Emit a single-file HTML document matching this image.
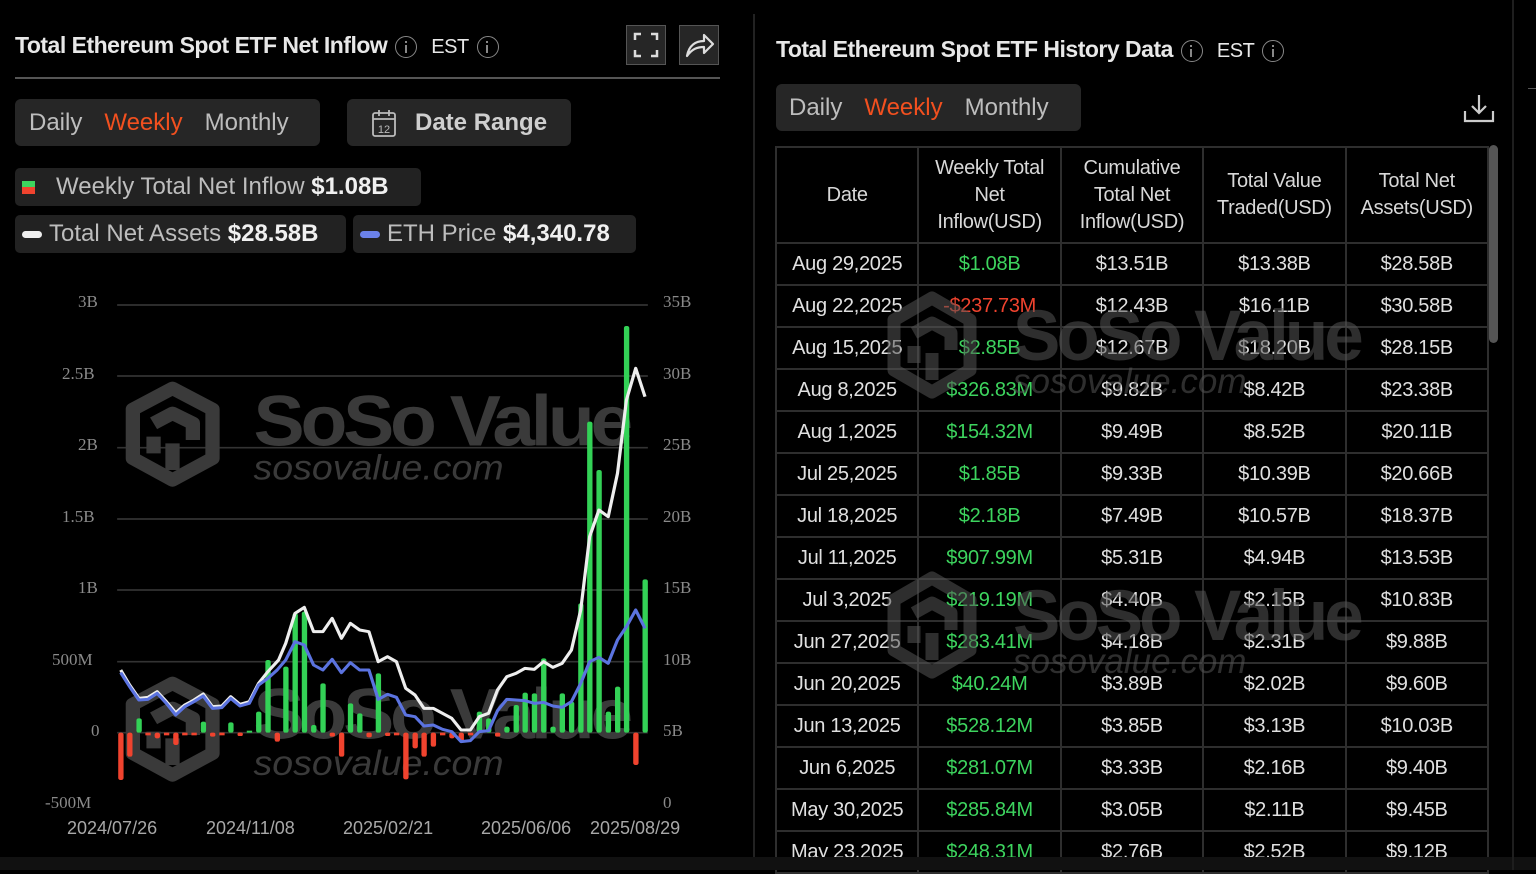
<!DOCTYPE html>
<html><head><meta charset="utf-8"><style>
*{margin:0;padding:0;box-sizing:border-box}
body{width:1536px;height:870px;background:#000;color:#e6e6e6;font-family:"Liberation Sans",sans-serif;position:relative;overflow:hidden}
.abs{position:absolute}
.title{font-size:23px;font-weight:bold;color:#e8e8e8;white-space:nowrap;letter-spacing:-0.5px}
.info{display:inline-block;width:22px;height:22px;border:1.5px solid #888;border-radius:50%;vertical-align:middle;position:relative;margin-left:8px}
.info:after{content:"";position:absolute;left:8.5px;top:8px;width:2px;height:8px;background:#888}
.info:before{content:"";position:absolute;left:8.5px;top:4px;width:2px;height:2px;background:#888}
.seg{background:#262626;border-radius:6px;font-size:24px;color:#bdbdbd;white-space:nowrap}
.orange{color:#f2501f}
.pill{background:#222;border-radius:5px;font-size:24px;color:#bdbdbd;white-space:nowrap;height:38px;line-height:38px}
.pill b{color:#f0f0f0}
.ax{font-family:"Liberation Serif",serif;font-size:17px;color:#8a8a8a}
.dt{font-size:18px;color:#a8a8a8}
table{border-collapse:collapse;position:absolute;left:775px;top:146px;width:714px;table-layout:fixed}
td{border:2px solid #2e2e2e;text-align:center;font-size:20px;color:#e0e0e0;height:42px;white-space:nowrap;letter-spacing:-0.3px}
th{border:2px solid #2e2e2e;font-weight:normal;font-size:20px;color:#d8d8d8;height:96px;line-height:27px;letter-spacing:-0.3px}
.g{color:#3dd45e}.r{color:#f0432e}
</style></head><body>

<div class="abs title" style="left:15px;top:32px">Total Ethereum Spot ETF Net Inflow<span class="info"></span><span style="font-weight:normal;margin-left:14px;font-size:20px">EST</span><span class="info"></span></div>
<div class="abs" style="left:626px;top:25px;width:40px;height:40px;background:#262626;border:1px solid #555"></div>
<svg class="abs" style="left:626px;top:25px" width="40" height="40"><path d="M9 15V9h6M25 9h6v6M31 25v6h-6M15 31H9v-6" stroke="#ddd" stroke-width="2.5" fill="none"/></svg>
<div class="abs" style="left:679px;top:25px;width:40px;height:40px;background:#262626;border:1px solid #555"></div>
<svg class="abs" style="left:679px;top:25px" width="40" height="40"><path d="M8 31C10 20 17 16 25 16V10l9 9-9 9v-6c-7 0-12 2-17 9z" stroke="#ddd" stroke-width="2.2" fill="none" stroke-linejoin="round"/></svg>
<div class="abs" style="left:15px;top:77px;width:705px;height:2px;background:#555"></div>

<div class="abs seg" style="left:15px;top:99px;width:305px;height:47px;line-height:47px;padding-left:14px">Daily<span class="orange" style="margin-left:22px">Weekly</span><span style="margin-left:22px">Monthly</span></div>
<div class="abs seg" style="left:347px;top:99px;width:224px;height:47px;line-height:47px;padding-left:68px;font-weight:bold;color:#cfcfcf">Date Range</div>
<svg class="abs" style="left:371px;top:108px" width="28" height="30"><rect x="2" y="5" width="22" height="23" rx="2" stroke="#bbb" stroke-width="1.8" fill="none"/><path d="M2 11h22M8 2v6M18 2v6" stroke="#bbb" stroke-width="1.8"/><text x="13" y="25" font-size="11" fill="#bbb" text-anchor="middle" font-family="Liberation Sans">12</text></svg>

<div class="abs pill" style="left:15px;top:168px;width:406px;padding-left:41px">Weekly Total Net Inflow <b>$1.08B</b></div>
<div class="abs" style="left:22px;top:181px;width:13px;height:6px;background:#3dd45e"></div>
<div class="abs" style="left:22px;top:187px;width:13px;height:7px;background:#f0432e"></div>
<div class="abs pill" style="left:15px;top:215px;width:331px;padding-left:34px">Total Net Assets <b>$28.58B</b></div>
<div class="abs" style="left:22px;top:231px;width:20px;height:7px;border-radius:4px;background:#eee"></div>
<div class="abs pill" style="left:353px;top:215px;width:283px;padding-left:34px">ETH Price <b>$4,340.78</b></div>
<div class="abs" style="left:360px;top:231px;width:20px;height:7px;border-radius:4px;background:#6b82ea"></div>

<div class="abs ax" style="left:78px;top:292px">3B</div>
<div class="abs ax" style="left:62px;top:364px">2.5B</div>
<div class="abs ax" style="left:78px;top:435px">2B</div>
<div class="abs ax" style="left:62px;top:507px">1.5B</div>
<div class="abs ax" style="left:78px;top:578px">1B</div>
<div class="abs ax" style="left:52px;top:650px">500M</div>
<div class="abs ax" style="left:91px;top:721px">0</div>
<div class="abs ax" style="left:45px;top:793px">-500M</div>
<div class="abs ax" style="left:663px;top:292px">35B</div>
<div class="abs ax" style="left:663px;top:364px">30B</div>
<div class="abs ax" style="left:663px;top:435px">25B</div>
<div class="abs ax" style="left:663px;top:507px">20B</div>
<div class="abs ax" style="left:663px;top:578px">15B</div>
<div class="abs ax" style="left:663px;top:650px">10B</div>
<div class="abs ax" style="left:663px;top:721px">5B</div>
<div class="abs ax" style="left:663px;top:793px">0</div>
<div class="abs dt" style="left:67px;top:818px">2024/07/26</div>
<div class="abs dt" style="left:206px;top:818px">2024/11/08</div>
<div class="abs dt" style="left:343px;top:818px">2025/02/21</div>
<div class="abs dt" style="left:481px;top:818px">2025/06/06</div>
<div class="abs dt" style="left:590px;top:818px">2025/08/29</div>

<svg class="abs" style="left:100px;top:290px" width="560" height="500" viewBox="0 0 1568 1500" preserveAspectRatio="none">
<g stroke="#333" stroke-width="5">
<path d="M48 45H1534M48 258H1534M48 473H1534M48 687H1534M48 900H1534M48 1115H1534M48 1328H1534M48 1543H1534"/>
</g>
<g fill="none" stroke="#3a3a3a" stroke-width="40" stroke-linejoin="round">
<path d="M203 295L315 358V505L203 570L92 505V358Z"/>
<path d="M150 400L203 370L260 400V450M150 440V490M203 460V540"/>
</g>
<text x="430" y="467" font-family="Liberation Sans" font-weight="bold" font-size="215" fill="#3a3a3a" letter-spacing="-12">SoSo Value</text>
<text x="430" y="568" font-family="Liberation Sans" font-style="italic" font-size="105" fill="#3a3a3a">sosovalue.com</text>
<g fill="none" stroke="#3a3a3a" stroke-width="40" stroke-linejoin="round">
<path d="M203 1180L315 1243V1390L203 1455L92 1390V1243Z"/>
<path d="M150 1285L203 1255L260 1285V1335M150 1325V1375M203 1345V1425"/>
</g>
<text x="430" y="1345" font-family="Liberation Sans" font-weight="bold" font-size="215" fill="#3a3a3a" letter-spacing="-12">SoSo Value</text>
<text x="430" y="1455" font-family="Liberation Sans" font-style="italic" font-size="105" fill="#3a3a3a">sosovalue.com</text>
<g fill="#f0432e">
<rect x="51" y="1328" width="15" height="142" rx="6"/><rect x="76" y="1328" width="15" height="72" rx="6"/>
<rect x="127" y="1328" width="15" height="8"/><rect x="153" y="1328" width="15" height="17" rx="6"/>
<rect x="179" y="1328" width="15" height="8"/><rect x="205" y="1328" width="15" height="37" rx="6"/>
<rect x="230" y="1328" width="15" height="8"/><rect x="256" y="1328" width="15" height="8"/>
<rect x="308" y="1328" width="15" height="12" rx="5"/><rect x="334" y="1328" width="15" height="8"/>
<rect x="385" y="1328" width="15" height="10" rx="5"/><rect x="489" y="1328" width="15" height="27" rx="6"/>
<rect x="643" y="1328" width="15" height="12" rx="5"/><rect x="669" y="1328" width="15" height="72" rx="6"/>
<rect x="746" y="1328" width="15" height="14" rx="5"/><rect x="798" y="1328" width="15" height="10" rx="5"/>
<rect x="823" y="1328" width="15" height="8"/><rect x="849" y="1328" width="15" height="140" rx="6"/>
<rect x="875" y="1328" width="15" height="47" rx="6"/><rect x="900" y="1328" width="15" height="72" rx="6"/>
<rect x="926" y="1328" width="15" height="42" rx="6"/><rect x="952" y="1328" width="15" height="8"/>
<rect x="978" y="1328" width="15" height="17" rx="6"/><rect x="1004" y="1328" width="15" height="27" rx="6"/>
<rect x="1030" y="1328" width="15" height="8"/><rect x="1106" y="1328" width="15" height="12" rx="5"/>
<rect x="1493" y="1328" width="15" height="97" rx="6"/>
</g>
<g fill="#33d156">
<rect x="102" y="1285" width="15" height="43" rx="6"/><rect x="282" y="1295" width="15" height="33" rx="6"/>
<rect x="359" y="1297" width="15" height="31" rx="6"/><rect x="411" y="1322" width="15" height="6"/>
<rect x="437" y="1265" width="15" height="63" rx="6"/><rect x="463" y="1110" width="15" height="218" rx="6"/>
<rect x="513" y="1130" width="15" height="198" rx="6"/><rect x="539" y="970" width="15" height="358" rx="6"/>
<rect x="565" y="965" width="15" height="363" rx="6"/><rect x="591" y="1305" width="15" height="23" rx="6"/>
<rect x="617" y="1180" width="15" height="148" rx="6"/><rect x="694" y="1240" width="15" height="88" rx="6"/>
<rect x="720" y="1270" width="15" height="58" rx="6"/><rect x="772" y="1150" width="15" height="178" rx="6"/>
<rect x="1055" y="1265" width="15" height="63" rx="6"/><rect x="1081" y="1285" width="15" height="43" rx="6"/>
<rect x="1132" y="1310" width="15" height="18" rx="6"/><rect x="1158" y="1245" width="15" height="83" rx="6"/>
<rect x="1183" y="1208" width="15" height="120" rx="6"/><rect x="1209" y="1210" width="15" height="118" rx="6"/>
<rect x="1235" y="1105" width="15" height="223" rx="6"/><rect x="1261" y="1310" width="15" height="18" rx="6"/>
<rect x="1287" y="1210" width="15" height="118" rx="6"/><rect x="1313" y="1235" width="15" height="93" rx="6"/>
<rect x="1339" y="940" width="15" height="388" rx="6"/><rect x="1364" y="395" width="15" height="933" rx="6"/>
<rect x="1390" y="540" width="15" height="788" rx="6"/><rect x="1416" y="1265" width="15" height="63" rx="6"/>
<rect x="1442" y="1190" width="15" height="138" rx="6"/><rect x="1467" y="108" width="15" height="1220" rx="6"/>
<rect x="1519" y="868" width="15" height="460" rx="6"/>
</g>
<path fill="none" stroke="#eeeeee" stroke-width="9" stroke-linejoin="round" d="M58 1140L83 1185L109 1225L134 1222L160 1205L186 1235L212 1268L237 1245L263 1230L289 1212L315 1250L341 1248L366 1220L392 1243L418 1235L444 1180L470 1145L500 1110L520 1060L546 970L572 952L598 1025L624 1025L650 985L676 1045L701 1000L727 1020L753 1025L779 1115L805 1100L830 1115L856 1195L882 1215L907 1255L933 1255L959 1270L985 1285L1011 1320L1037 1320L1062 1280L1088 1270L1113 1200L1139 1160L1165 1150L1190 1135L1216 1138L1242 1115L1268 1132L1294 1120L1320 1080L1346 960L1371 740L1397 660L1423 680L1449 550L1474 330L1500 235L1526 320"/>
<path fill="none" stroke="#5b73e0" stroke-width="9" stroke-linejoin="round" d="M58 1148L83 1190L109 1230L134 1228L160 1210L186 1240L212 1275L237 1250L263 1235L289 1218L315 1255L341 1253L366 1225L392 1248L418 1240L444 1185L470 1165L496 1140L520 1110L546 1055L572 1065L598 1125L624 1140L650 1108L676 1148L701 1118L727 1140L753 1140L779 1228L805 1213L830 1222L856 1275L882 1280L907 1308L933 1305L959 1318L985 1325L1011 1355L1037 1352L1062 1325L1088 1322L1113 1262L1139 1228L1165 1230L1190 1232L1216 1240L1242 1237L1268 1248L1294 1252L1320 1235L1346 1180L1371 1115L1397 1102L1423 1120L1449 1050L1474 1010L1500 960L1526 1015"/>
</svg>

<div class="abs" style="left:753px;top:14px;width:2px;height:845px;background:#222"></div>

<div class="abs title" style="left:776px;top:36px">Total Ethereum Spot ETF History Data<span class="info"></span><span style="font-weight:normal;margin-left:14px;font-size:20px">EST</span><span class="info"></span></div>
<div class="abs seg" style="left:776px;top:84px;width:305px;height:47px;line-height:47px;padding-left:13px">Daily<span class="orange" style="margin-left:22px">Weekly</span><span style="margin-left:22px">Monthly</span></div>
<svg class="abs" style="left:1462px;top:92px" width="34" height="32"><path d="M3 19v10h28V19M17 3v18M10 14l7 7 7-7" stroke="#ccc" stroke-width="2.2" fill="none"/></svg>

<table>
<tr><th>Date</th><th>Weekly Total<br>Net<br>Inflow(USD)</th><th>Cumulative<br>Total Net<br>Inflow(USD)</th><th>Total Value<br>Traded(USD)</th><th>Total Net<br>Assets(USD)</th></tr>
<tr><td>Aug 29,2025</td><td class="g">$1.08B</td><td>$13.51B</td><td>$13.38B</td><td>$28.58B</td></tr>
<tr><td>Aug 22,2025</td><td class="r">-$237.73M</td><td>$12.43B</td><td>$16.11B</td><td>$30.58B</td></tr>
<tr><td>Aug 15,2025</td><td class="g">$2.85B</td><td>$12.67B</td><td>$18.20B</td><td>$28.15B</td></tr>
<tr><td>Aug 8,2025</td><td class="g">$326.83M</td><td>$9.82B</td><td>$8.42B</td><td>$23.38B</td></tr>
<tr><td>Aug 1,2025</td><td class="g">$154.32M</td><td>$9.49B</td><td>$8.52B</td><td>$20.11B</td></tr>
<tr><td>Jul 25,2025</td><td class="g">$1.85B</td><td>$9.33B</td><td>$10.39B</td><td>$20.66B</td></tr>
<tr><td>Jul 18,2025</td><td class="g">$2.18B</td><td>$7.49B</td><td>$10.57B</td><td>$18.37B</td></tr>
<tr><td>Jul 11,2025</td><td class="g">$907.99M</td><td>$5.31B</td><td>$4.94B</td><td>$13.53B</td></tr>
<tr><td>Jul 3,2025</td><td class="g">$219.19M</td><td>$4.40B</td><td>$2.15B</td><td>$10.83B</td></tr>
<tr><td>Jun 27,2025</td><td class="g">$283.41M</td><td>$4.18B</td><td>$2.31B</td><td>$9.88B</td></tr>
<tr><td>Jun 20,2025</td><td class="g">$40.24M</td><td>$3.89B</td><td>$2.02B</td><td>$9.60B</td></tr>
<tr><td>Jun 13,2025</td><td class="g">$528.12M</td><td>$3.85B</td><td>$3.13B</td><td>$10.03B</td></tr>
<tr><td>Jun 6,2025</td><td class="g">$281.07M</td><td>$3.33B</td><td>$2.16B</td><td>$9.40B</td></tr>
<tr><td>May 30,2025</td><td class="g">$285.84M</td><td>$3.05B</td><td>$2.11B</td><td>$9.45B</td></tr>
<tr><td>May 23,2025</td><td class="g">$248.31M</td><td>$2.76B</td><td>$2.52B</td><td>$9.12B</td></tr>
</table>

<svg class="abs" style="left:870px;top:280px;opacity:0.55" width="520" height="420">
<g fill="none" stroke="#555" stroke-width="13" stroke-linejoin="round">
<path d="M62 18L100 40V90L62 112L24 90V40Z"/><path d="M44 53L62 43L81 53V70M44 66V83M62 73V100"/>
<path d="M62 298L100 320V370L62 392L24 370V320Z"/><path d="M44 333L62 323L81 333V350M44 346V363M62 353V380"/>
</g>
<g fill="#555" font-family="Liberation Sans">
<text x="143" y="80" font-weight="bold" font-size="71" letter-spacing="-4">SoSo Value</text>
<text x="143" y="113" font-style="italic" font-size="35">sosovalue.com</text>
<text x="143" y="360" font-weight="bold" font-size="71" letter-spacing="-4">SoSo Value</text>
<text x="143" y="393" font-style="italic" font-size="35">sosovalue.com</text>
</g>
</svg>

<div class="abs" style="left:0;top:857px;width:1536px;height:13px;background:#111"></div>
<div class="abs" style="left:1489px;top:145px;width:9px;height:198px;border-radius:5px;background:#555"></div>
<div class="abs" style="left:1512px;top:0;width:2px;height:870px;background:#1e1e1e"></div>
<div class="abs" style="left:1528px;top:88px;width:8px;height:1px;background:#555"></div>
</body></html>
